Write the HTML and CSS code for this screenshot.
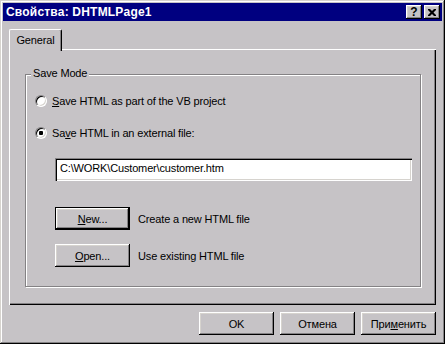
FILE: index.html
```html
<!DOCTYPE html>
<html lang="ru">
<head>
    <meta charset="UTF-8">
    <title>Свойства: DHTMLPage1</title>
    <link rel="stylesheet" href="styles.css">
</head>
<body>
    <div class="window">
        <div class="titlebar">
            <span class="title">Свойства: DHTMLPage1</span>
            <div class="title-buttons">
                <button class="tbtn help">?</button>
                <button class="tbtn close">
                    <svg width="8" height="7" viewBox="0 0 8 7">
                        <path d="M0 0h2l2 2 2-2h2v1l-2.5 2.5 2.5 2.5v1h-2l-2-2-2 2h-2v-1l2.5-2.5-2.5-2.5z" fill="#000"/>
                    </svg>
                </button>
            </div>
        </div>

        <div class="dialog">
            <div class="tabs">
                <div class="tab">General</div>
            </div>

            <div class="panel">
                <div class="group">
                    <span class="group-label">Save Mode</span>

                    <label class="radio-row">
                        <span class="radio"></span>
                        <span><u>S</u>ave HTML as part of the VB project</span>
                    </label>
                    <label class="radio-row second">
                        <span class="radio checked"></span>
                        <span>Sa<u>v</u>e HTML in an external file:</span>
                    </label>

                    <div class="path-field">C:\WORK\Customer\customer.htm</div>

                    <div class="action-row first">
                        <button class="btn default"><u>N</u>ew...</button>
                        <span>Create a new HTML file</span>
                    </div>
                    <div class="action-row">
                        <button class="btn"><u>O</u>pen...</button>
                        <span>Use existing HTML file</span>
                    </div>
                </div>
            </div>

            <div class="footer">
                <button class="btn">OK</button>
                <button class="btn">Отмена</button>
                <button class="btn">При<u>м</u>енить</button>
            </div>
        </div>
    </div>
</body>
</html>
```

FILE: styles.css
```css
body {
    margin: 0;
    background: #c6c3c6;
    font-family: "Liberation Sans", Arial, sans-serif;
    font-size: 11px;
    letter-spacing: -0.15px;
    color: #000;
}
.window {
    width: 445px;
    height: 344px;
    box-sizing: border-box;
    padding: 3px;
    background: #c6c3c6;
    box-shadow: inset -1px -1px #000, inset 1px 1px #d6d3ce,
                inset -2px -2px #848284, inset 2px 2px #fff;
}
.titlebar {
    height: 18px;
    background: #000080;
    display: flex;
    align-items: center;
    justify-content: space-between;
    padding: 0 2px 0 3px;
}
.title {
    color: #fff;
    font-weight: bold;
    font-size: 12px;
    letter-spacing: 0.2px;
}
.title-buttons {
    display: flex;
    gap: 2px;
}
.tbtn {
    width: 16px;
    height: 14px;
    padding: 0;
    border: none;
    background: #c6c3c6;
    box-shadow: inset -1px -1px #000, inset 1px 1px #fff,
                inset -2px -2px #848284, inset 2px 2px #d6d3ce;
    display: flex;
    align-items: center;
    justify-content: center;
    font-family: "Liberation Sans", Arial, sans-serif;
}
.tbtn.help {
    font-weight: bold;
    font-size: 12px;
    line-height: 1;
}
.dialog {
    padding: 8px 6px 0 6px;
}
.tabs {
    display: flex;
    height: 20px;
}
.tab {
    position: relative;
    z-index: 1;
    width: 53px;
    height: 22px;
    box-sizing: border-box;
    background: #c6c3c6;
    border-left: 1px solid #fff;
    border-top: 1px solid #fff;
    border-right: 1px solid #000;
    border-top-left-radius: 2px;
    border-top-right-radius: 2px;
    box-shadow: inset -1px 0 #848284;
    text-align: center;
    padding-top: 4px;
}
.panel {
    height: 256px;
    box-sizing: border-box;
    padding: 25px 13px 0 16px;
    box-shadow: inset 1px 1px #fff, inset -1px -1px #000,
                inset -2px -2px #848284;
}
.group {
    position: relative;
    width: 396px;
    height: 213px;
    box-sizing: border-box;
    border: 1px solid #848284;
    box-shadow: 1px 1px #fff, inset 1px 1px #fff;
    padding: 18px 0 0 9px;
}
.group-label {
    position: absolute;
    top: -8px;
    left: 5px;
    padding: 0 2px;
    background: #c6c3c6;
    line-height: 13px;
}
.radio-row {
    display: flex;
    align-items: center;
    gap: 5px;
    height: 16px;
}
.radio-row.second {
    margin-top: 16px;
}
.radio {
    width: 12px;
    height: 12px;
    box-sizing: border-box;
    border-radius: 50%;
    border: 1px solid;
    border-color: #848284 #fff #fff #848284;
    box-shadow: inset 1px 1px #000, inset -1px -1px #d6d3ce;
    background: #fff;
}
.radio.checked {
    background: radial-gradient(circle, #000 0, #000 2px, #fff 2.5px);
}
.path-field {
    margin: 17px 0 0 20px;
    width: 357px;
    height: 23px;
    box-sizing: border-box;
    background: #fff;
    box-shadow: inset 1px 1px #848284, inset 2px 2px #000,
                inset -1px -1px #fff, inset -2px -2px #d6d3ce;
    padding: 4px 0 0 5px;
}
.action-row {
    display: flex;
    align-items: center;
    gap: 8px;
    margin: 14px 0 0 20px;
}
.action-row.first {
    margin-top: 26px;
}
.btn {
    width: 75px;
    height: 23px;
    padding: 0;
    border: none;
    background: #c6c3c6;
    font-family: "Liberation Sans", Arial, sans-serif;
    font-size: 11px;
    letter-spacing: -0.15px;
    color: #000;
    box-shadow: inset -1px -1px #000, inset 1px 1px #fff,
                inset -2px -2px #848284, inset 2px 2px #d6d3ce;
}
.btn.default {
    border: 1px solid #000;
    box-shadow: inset -1px -1px #000, inset 1px 1px #fff,
                inset -2px -2px #848284, inset 2px 2px #d6d3ce;
}
.footer {
    display: flex;
    justify-content: flex-end;
    gap: 6px;
    margin-top: 7px;
}
```
